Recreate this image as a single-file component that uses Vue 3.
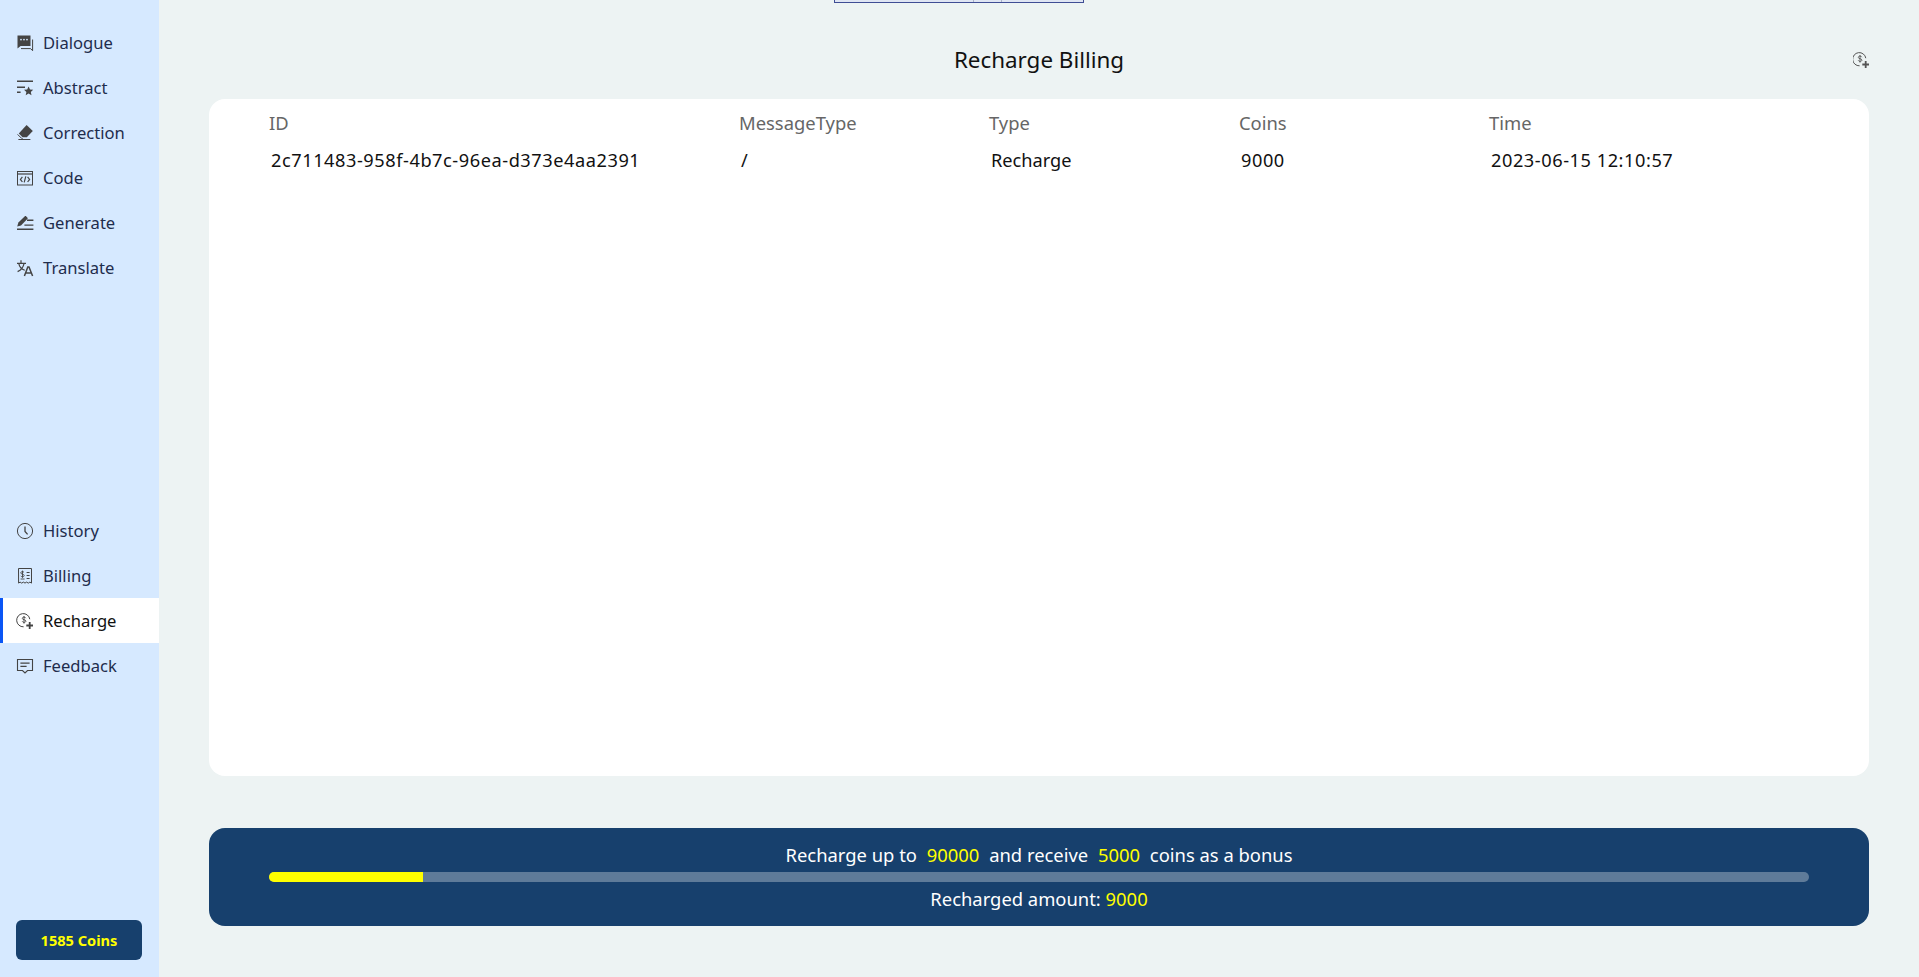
<template>
  <div class="page">
    <aside class="sidebar">
      <nav class="nav">
        <a v-for="item in topNav" :key="item.label" class="nav-item">
          <svg class="nav-icon" viewBox="0 0 18 18" v-html="item.icon"></svg>
          <span>{{ item.label }}</span>
        </a>
      </nav>
      <nav class="nav nav-bottom">
        <a
          v-for="item in bottomNav"
          :key="item.label"
          class="nav-item"
          :class="{ active: item.label === 'Recharge' }"
        >
          <svg class="nav-icon" viewBox="0 0 18 18" v-html="item.icon"></svg>
          <span>{{ item.label }}</span>
        </a>
      </nav>
      <button class="coins-btn">1585 Coins</button>
    </aside>

    <main class="main">
      <div class="top-strip">
        <span class="strip-a"></span>
        <span class="strip-b"></span>
        <span class="strip-c"></span>
      </div>

      <header class="header">
        <span></span>
        <h1 class="title">Recharge Billing</h1>
        <svg class="header-icon" viewBox="1 1 16 16" v-html="rechargeIcon"></svg>
      </header>

      <section class="table-card">
        <div class="table-row table-head">
          <div v-for="col in columns" :key="col">{{ col }}</div>
        </div>
        <div v-for="row in rows" :key="row.id" class="table-row table-body">
          <div class="num">{{ row.id }}</div>
          <div>{{ row.messageType }}</div>
          <div>{{ row.type }}</div>
          <div class="num">{{ row.coins }}</div>
          <div class="num">{{ row.time }}</div>
        </div>
      </section>

      <section class="banner">
        <div class="banner-line">
          Recharge up to <b class="hl">90000</b> and receive <b class="hl">5000</b> coins as a bonus
        </div>
        <div class="progress">
          <div class="progress-fill" :style="{ width: progress + '%' }"></div>
        </div>
        <div class="banner-line">
          Recharged amount: <span class="hl-plain">9000</span>
        </div>
      </section>
    </main>
  </div>
</template>

<script setup>
const rechargeIcon = `
  <path d="M13.8 7.2A6.6 6.6 0 1 0 7.6 14.8" fill="none" stroke="currentColor" stroke-width="1"/>
  <path d="M9.8 6.2C9.5 5.5 8.9 5.1 8 5.1c-1 0-1.7.5-1.7 1.3 0 1.8 3.6.9 3.6 2.7 0 .8-.8 1.3-1.8 1.3-.9 0-1.6-.4-1.9-1.1M8 4v7.6" fill="none" stroke="currentColor" stroke-width=".9"/>
  <path d="M12.8 10h1.8v2.6H17v1.8h-2.4V17h-1.8v-2.6h-2.5v-1.8h2.5z" fill="currentColor"/>`;

const topNav = [
  {
    label: "Dialogue",
    icon: `<path d="M1.5 1.5h13v10.6H4.6L1.5 14.4z" fill="currentColor"/>
      <circle cx="5" cy="5.6" r=".9" fill="#d6e9ff"/><circle cx="8" cy="5.6" r=".9" fill="#d6e9ff"/><circle cx="11" cy="5.6" r=".9" fill="#d6e9ff"/>
      <path d="M16.6 5.5v11.2L14.6 14.6H5" fill="none" stroke="currentColor" stroke-width="1"/>`,
  },
  {
    label: "Abstract",
    icon: `<path d="M1 1.5h16v1.4H1zM1 7.6h8v1.4H1zM1 12.6h3.6V14H1z" fill="currentColor"/>
      <path d="M12.6 7.4l1.4 3 3.2.4-2.4 2.2.7 3.2-2.9-1.7-2.9 1.7.7-3.2L8 10.8l3.2-.4z" fill="currentColor"/>`,
  },
  {
    label: "Correction",
    icon: `<path d="M10.6 1l6.2 6-6 6.2H6.6L2.8 9.4z" fill="currentColor"/>
      <path d="M1.6 10.4l3.8 3.8a2 2 0 0 0 1.4.6M2.4 15.5h12" fill="none" stroke="currentColor" stroke-width="1"/>`,
  },
  {
    label: "Code",
    icon: `<rect x="1.5" y="2.5" width="15" height="13.5" fill="none" stroke="currentColor" stroke-width="1"/>
      <path d="M1.5 5h15" stroke="currentColor" stroke-width="1.2"/>
      <path d="M6.4 7.8L4.4 10.4l2 2.6M11.6 7.8l2 2.6-2 2.6M9.8 7.4l-1.6 6" fill="none" stroke="currentColor" stroke-width="1.2"/>`,
  },
  {
    label: "Generate",
    icon: `<path d="M1.2 12.4L2.4 8.6 8.6 2.4c.5-.5 1.2-.5 1.7 0l1 1c.5.5.5 1.2 0 1.7L5 11.4z" fill="currentColor"/>
      <path d="M1 14.6h16.4v1.5H1zM11 5.6h6.4v1.3H11zM8.4 10.4h9v1.3h-9z" fill="currentColor"/>`,
  },
  {
    label: "Translate",
    icon: `<path d="M1 4.4h9M5 1.2v3.2M2.8 4.6c.6 3 3 5.6 6 6.6M8 4.6c-.6 3.4-3 6.4-6.4 8" fill="none" stroke="currentColor" stroke-width="1.2"/>
      <path d="M8.4 17l3.4-9h1.2l3.6 9M9.6 14h6" fill="none" stroke="currentColor" stroke-width="1.5"/>`,
  },
];

const bottomNav = [
  {
    label: "History",
    icon: `<circle cx="9" cy="9" r="7.6" fill="none" stroke="currentColor" stroke-width="1"/>
      <path d="M9 4.4v5l2.6 3" fill="none" stroke="currentColor" stroke-width="1.3"/>`,
  },
  {
    label: "Billing",
    icon: `<path d="M2.5 1.5h13v14.6l-1.6-1-1.6 1-1.7-1-1.6 1-1.6-1-1.7 1-1.6-1-1.5 1z" fill="none" stroke="currentColor" stroke-width="1"/>
      <path d="M10.6 5h3v1h-3zM10.6 8h3v1h-3zM10.6 11h3v1h-3z" fill="currentColor"/>
      <path d="M8 5.4C7.6 4.8 7 4.6 6.4 4.6 5.4 4.6 4.8 5.1 4.8 5.9c0 1.7 3.4.9 3.4 2.6 0 .8-.8 1.3-1.7 1.3-.8 0-1.4-.3-1.8-1M6.5 3.6v7.2M4.6 12h4" fill="none" stroke="currentColor" stroke-width=".9"/>`,
  },
  { label: "Recharge", icon: rechargeIcon },
  {
    label: "Feedback",
    icon: `<path d="M1.5 2.5h15v11h-5L9 16l-2.5-2.5h-5z" fill="none" stroke="currentColor" stroke-width="1.1"/>
      <path d="M4.4 5.6h9.2v1.2H4.4zM4.4 8.8h6.2V10H4.4z" fill="currentColor"/>`,
  },
];

const columns = ["ID", "MessageType", "Type", "Coins", "Time"];

const rows = [
  {
    id: "2c711483-958f-4b7c-96ea-d373e4aa2391",
    messageType: "/",
    type: "Recharge",
    coins: "9000",
    time: "2023-06-15 12:10:57",
  },
];

const progress = 10;
</script>

<style>
html,
body {
  margin: 0;
  background: #edf3f3;
}
</style>

<style scoped>
.page {
  display: flex;
  height: 977px;
  overflow: hidden;
  font-family: "Noto Sans", "Open Sans", sans-serif;
  background: #edf3f3;
}

.sidebar {
  width: 159px;
  flex-shrink: 0;
  display: flex;
  flex-direction: column;
  padding-top: 20px;
  background: #d6e9ff;
  box-sizing: border-box;
}

.nav-bottom {
  margin-top: auto;
}

.nav-item {
  height: 45px;
  display: flex;
  align-items: center;
  gap: 9px;
  padding-left: 16px;
  font-size: 16.6px;
  color: #1f2d4d;
  box-sizing: border-box;
}

.nav-item.active {
  background: #fff;
  color: #111;
  border-left: 3px solid #0a56f5;
  padding-left: 13px;
}

.nav-icon {
  width: 18px;
  height: 18px;
  flex-shrink: 0;
  color: #444;
}

.coins-btn {
  width: 126px;
  height: 40px;
  margin: 232px 0 17px 16px;
  border: none;
  border-radius: 6px;
  background: #17406d;
  color: #ff0;
  font-family: inherit;
  font-size: 14.6px;
  font-weight: 700;
}

.main {
  position: relative;
  flex: 1;
  min-width: 0;
  display: flex;
  flex-direction: column;
  padding: 0 50px 51px;
}

.top-strip {
  position: absolute;
  top: -1px;
  left: 675px;
  width: 250px;
  height: 4px;
  display: flex;
  border: 1px solid #3f4d94;
  box-sizing: border-box;
  background: #dfe5f3;
}

.strip-a {
  width: 138px;
}

.strip-b {
  width: 27px;
  border-left: 1px solid #aab2c8;
  border-right: 1px solid #aab2c8;
}

.strip-c {
  flex: 1;
}

.header {
  height: 99px;
  flex-shrink: 0;
  display: grid;
  grid-template-columns: 1fr auto 1fr;
  align-items: center;
  padding-top: 20px;
  box-sizing: border-box;
}

.title {
  margin: 0;
  font-size: 22.4px;
  font-weight: 400;
  color: #111;
}

.header-icon {
  justify-self: end;
  width: 16px;
  height: 16px;
  color: #555;
}

.table-card {
  flex: 1;
  min-height: 0;
  padding: 5px 60px;
  margin-bottom: 52px;
  background: #fff;
  border-radius: 16px;
}

.table-row {
  display: grid;
  grid-template-columns: 470px 250px 250px 250px 1fr;
  align-items: center;
  height: 37px;
}

.table-head {
  font-size: 18.4px;
  color: #666;
}

.table-body {
  padding-left: 2px;
  font-size: 18.2px;
  color: #111;
}

.num {
  letter-spacing: 0.55px;
}

.banner {
  height: 98px;
  flex-shrink: 0;
  padding: 12px 60px;
  display: flex;
  flex-direction: column;
  align-items: center;
  background: #17406d;
  border-radius: 16px;
  box-sizing: border-box;
  color: #fff;
}

.banner-line {
  font-size: 18.4px;
  line-height: 30px;
}

.hl {
  margin: 0 5px;
  font-weight: 400;
  color: #ff0;
}

.hl-plain {
  color: #ff0;
}

.progress {
  width: 100%;
  height: 10px;
  margin: 2px 0;
  background: #5f7b99;
  border-radius: 5px;
  overflow: hidden;
}

.progress-fill {
  height: 100%;
  background: #ff0;
}
</style>
